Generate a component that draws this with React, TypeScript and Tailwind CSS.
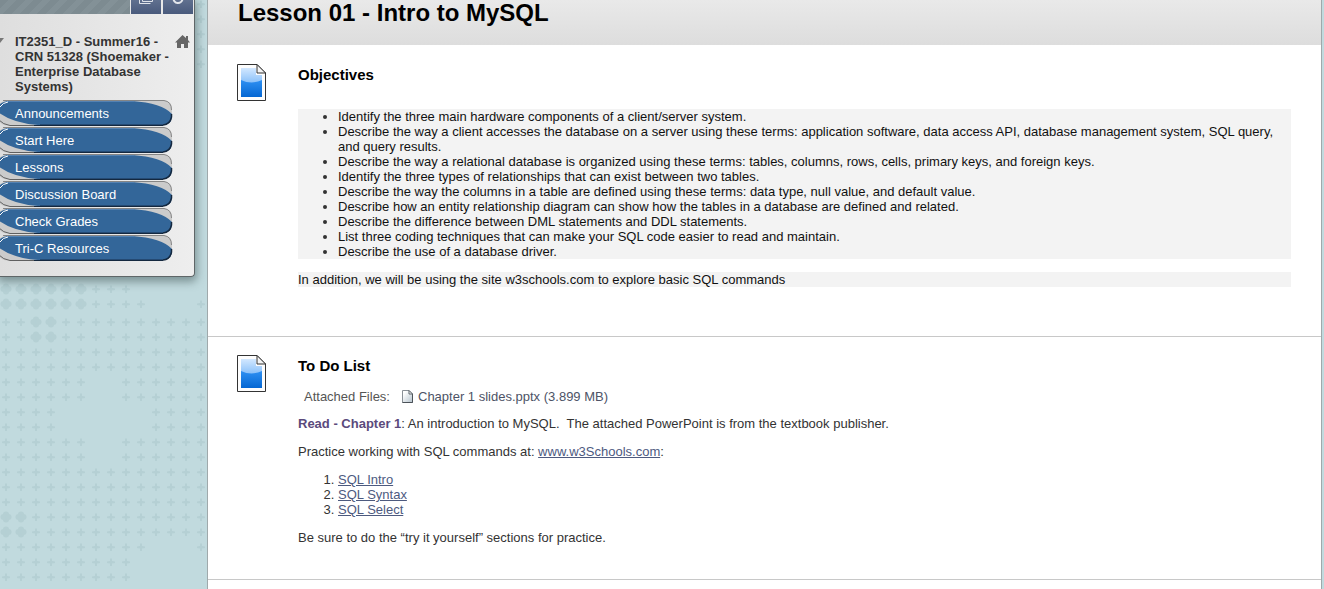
import React from 'react';

const menuItems = ['Announcements', 'Start Here', 'Lessons', 'Discussion Board', 'Check Grades', 'Tri-C Resources'];

const objectives = [
  'Identify the three main hardware components of a client/server system.',
  'Describe the way a client accesses the database on a server using these terms: application software, data access API, database management system, SQL query, and query results.',
  'Describe the way a relational database is organized using these terms: tables, columns, rows, cells, primary keys, and foreign keys.',
  'Identify the three types of relationships that can exist between two tables.',
  'Describe the way the columns in a table are defined using these terms: data type, null value, and default value.',
  'Describe how an entity relationship diagram can show how the tables in a database are defined and related.',
  'Describe the difference between DML statements and DDL statements.',
  'List three coding techniques that can make your SQL code easier to read and maintain.',
  'Describe the use of a database driver.',
];

// One string per row of the backdrop: "o" is a clover, "+" a small cross.
const patternRows: [number, string][] = [
  [4, '             +'],
  [19, '             +'],
  [34, '             +'],
  [49, '             +'],
  [64, '             +'],
  [289, 'oooooo+++'],
  [304, 'oooooo++++   +'],
  [322, '++oo++++++++++'],
  [337, '++oo++++++++++'],
  [352, '++++++++++++++'],
  [367, '++++++++++++++'],
  [382, '++++++  ++++++'],
  [397, '++++++  ++++++'],
  [412, '++++      ++++'],
  [427, '++++      ++++'],
  [442, '++++++  ++++++'],
  [457, '++++++  ++++++'],
  [472, '++++++++++++++'],
  [487, '++++++++++++++'],
  [502, '++++++++++++++'],
  [517, 'oo++++++++++++'],
  [532, 'oo++++++++++++'],
  [547, '++++++++++   +'],
  [562, '+++++++++'],
  [577, '+++++++++'],
];

function Backdrop() {
  return (
    <svg className="absolute left-0 top-0" width="207" height="589" aria-hidden="true">
      {patternRows.map(([y, row]) =>
        row.split('').map((mark, i) => {
          const x = 6 + i * 15;
          if (mark === 'o') {
            return (
              <g key={`${y}-${i}`} fill="#b5d0d4">
                <circle cx={x} cy={y - 2.5} r="3" />
                <circle cx={x} cy={y + 2.5} r="3" />
                <circle cx={x - 2.5} cy={y} r="3" />
                <circle cx={x + 2.5} cy={y} r="3" />
              </g>
            );
          }
          if (mark === '+') {
            return (
              <path
                key={`${y}-${i}`}
                fill="#b5d0d4"
                d={`M${x - 1} ${y - 3.5}h2v2.500l3 .5v1.500l-3 .5v2.500h-2v-2.500l-3-.5v-1.500l3-.5z`}
              />
            );
          }
          return null;
        }),
      )}
    </svg>
  );
}

function DocumentIcon() {
  return (
    <svg className="shrink-0" width="29" height="37" viewBox="0 0 29 37" aria-hidden="true">
      <defs>
        <linearGradient id="docTop" x1="0" y1="0" x2="0" y2="1">
          <stop offset="0" stopColor="#d3e8ff" />
          <stop offset="0.600" stopColor="#7db9f8" />
        </linearGradient>
        <linearGradient id="docLow" x1="0" y1="0" x2="0" y2="1">
          <stop offset="0" stopColor="#2f90f2" />
          <stop offset="1" stopColor="#0567d3" />
        </linearGradient>
      </defs>
      <path d="M.5.5H20L28.500 9v27.500H.5z" fill="#fdfdfd" stroke="#333" />
      <path d="M4 4h15v7h6v22H4z" fill="url(#docTop)" />
      <path d="M4 16q10.500 5 21 0v17H4z" fill="url(#docLow)" />
      <path d="M20 .5V9h8.500z" fill="#f4f4f4" stroke="#333" strokeLinejoin="round" />
    </svg>
  );
}

function FileIcon() {
  return (
    <svg className="shrink-0" width="11" height="13" viewBox="0 0 11 13" aria-hidden="true">
      <defs>
        <linearGradient id="fileFill" x1="0" y1="0" x2="1" y2="1">
          <stop offset="0.200" stopColor="#fff" />
          <stop offset="1" stopColor="#b4c2cc" />
        </linearGradient>
      </defs>
      <path d="M.5.5H7L10.500 4v8.500H.5z" fill="url(#fileFill)" stroke="#8a9096" />
      <path d="M10.500 4v8.500H.5" fill="none" stroke="#4b5258" />
      <path d="M7 .5V4h3.500z" fill="#fff" stroke="#5d646a" />
    </svg>
  );
}

function MenuButton({ label }: { label: string }) {
  return (
    <a href="#" className="relative block h-[27px] w-[173px] pl-[15px] text-[13px] leading-[28px] text-white">
      <svg className="absolute left-0 top-0" width="173" height="27" viewBox="0 0 173 27" aria-hidden="true">
        <path d="M-10 .5H164Q172 1 172 9V17Q171 25 163 25.500H6Q-1 24-4 17V9Q-2 2 6 .5z" fill="#cbcbcb" />
        <path d="M3 .5H164Q171.500 1.500 171.500 10" fill="none" stroke="#858585" />
        <path d="M-2 14V6Q2 1 10 1H132Q162 3 172 14V17Q171 25 163 25H38Q12 23-2 12z" fill="#336699" />
        <path d="M6 1.500H134" fill="none" stroke="#5482b3" />
        <path d="M0 7Q3 2.500 8 2" fill="none" stroke="#fff" />
        <path d="M171.500 14V17Q170 24.500 163 25" fill="none" stroke="#14283f" strokeWidth="1.500" />
        <path d="M163 25.500H32" fill="none" stroke="#14283f" />
        <path d="M163 24.500H40" fill="none" stroke="#254a73" />
        <path d="M-1 20Q3 24.500 10 25.500H34" fill="none" stroke="#606060" />
      </svg>
      <span className="relative">{label}</span>
    </a>
  );
}

function Sidebar() {
  return (
    <aside className="relative w-[207px] shrink-0 overflow-hidden">
      <Backdrop />
      <div className="relative w-[195px] rounded-br border-b border-r border-[#5f6668] bg-linear-to-r from-[#dedede] to-[#eeeeee] pb-[14px] shadow-[0_3px_9px_2px_rgba(60,80,80,0.5)]">
        <div className="flex h-[14px] bg-[#e8e8e8] pr-px">
          <div className="mr-px flex-1 bg-[repeating-linear-gradient(135deg,#7d8b91_0px,#7d8b91_6px,#839197_6px,#839197_12px)]" />
          <button aria-label="Open menu in a window" className="mr-[2px] flex h-[14px] w-[30px] justify-center overflow-hidden bg-linear-to-b from-[#60708f] to-[#495a7c]">
            <svg width="15" height="14" viewBox="0 0 15 14" aria-hidden="true">
              <path d="M.5 0V3.500H11.500M3.500 0V1.500H13.500V0" fill="none" stroke="#dfe3ea" />
            </svg>
          </button>
          <button aria-label="Refresh" className="flex h-[14px] w-[30px] justify-center overflow-hidden bg-linear-to-b from-[#60708f] to-[#495a7c]">
            <svg width="14" height="14" viewBox="0 0 14 14" aria-hidden="true">
              <path d="M2.500-2A4.500 4.500 0 0 0 11.500-1" fill="none" stroke="#e3e6ec" strokeWidth="2" />
            </svg>
          </button>
        </div>
        <div className="flex pt-5">
          <svg className="mt-1 shrink-0" width="15" height="8" aria-hidden="true">
            <path d="M-4 0H4L0 5z" fill="#777" />
          </svg>
          <h2 className="w-[160px] text-[13px] font-bold leading-[15px] text-[#333]">
            IT2351_D - Summer16 - CRN 51328 (Shoemaker - Enterprise Database Systems)
          </h2>
          <a href="#" aria-label="Course home">
            <svg className="mt-px" width="15" height="14" viewBox="0 0 15 14" aria-hidden="true">
              <path d="M7.500 0L11 3V1h2v4l2 2.500h-2V13H9V9H6v4H2V7.500H0z" fill="#666" />
            </svg>
          </a>
        </div>
        <nav className="pt-[6px]">
          {menuItems.map((label) => (
            <MenuButton key={label} label={label} />
          ))}
        </nav>
      </div>
    </aside>
  );
}

const linkStyle = 'text-[#4d5a7f] underline';

export default function App() {
  return (
    <div className="flex min-h-screen overflow-hidden bg-[#c1dade] font-['Liberation_Sans',Arial,sans-serif] text-[13px] leading-[15px] text-[#333]">
      <Sidebar />
      <main className="mr-[2px] min-w-0 flex-1 border-x border-[#9fa9ab] bg-white">
        <header className="h-[45px] bg-linear-to-b from-[#e9e9e9] to-[#dddddd] pl-[30px]">
          <h1 className="text-[24px] font-bold leading-[26px] text-black">Lesson 01 - Intro to MySQL</h1>
        </header>

        <article className="flex gap-8 border-b border-[#c8c8c8] pb-[49px] pl-[29px] pr-[30px] pt-[19px]">
          <DocumentIcon />
          <div className="min-w-0 flex-1">
            <h3 className="pt-[2px] text-[15px] font-bold leading-[17px] text-black">Objectives</h3>
            <ul className="mt-[26px] list-disc bg-[#f3f3f3] pl-10">
              {objectives.map((text) => (
                <li key={text}><span className="text-[#111]">{text}</span></li>
              ))}
            </ul>
            <p className="mt-[13px] bg-[#f3f3f3] text-[#111]">
              In addition, we will be using the site w3schools.com to explore basic SQL commands
            </p>
          </div>
        </article>

        <article className="flex gap-8 border-b border-[#c8c8c8] pb-[34px] pl-[29px] pr-[30px] pt-[18px]">
          <DocumentIcon />
          <div className="min-w-0 flex-1">
            <h3 className="pt-[2px] text-[15px] font-bold leading-[17px] text-black">To Do List</h3>
            <div className="mt-[15px] flex items-center pl-[6px] text-[#555]">
              <span>Attached Files:</span>
              <a href="#" className="ml-3 flex items-center gap-[5px] text-[#4d5366]">
                <FileIcon />
                <span>Chapter 1 slides.pptx (3.899 MB)</span>
              </a>
            </div>
            <p className="mt-3">
              <strong className="text-[#5b4a7c]">Read - Chapter 1</strong>: An introduction to MySQL.&nbsp; The attached PowerPoint is from the textbook publisher.
            </p>
            <p className="mt-[13px]">
              Practice working with SQL commands at: <a href="#" className={linkStyle}>www.w3Schools.com</a>:
            </p>
            <ol className="mt-[13px] list-decimal pl-10">
              <li><a href="#" className={linkStyle}>SQL Intro</a></li>
              <li><a href="#" className={linkStyle}>SQL Syntax</a></li>
              <li><a href="#" className={linkStyle}>SQL Select</a></li>
            </ol>
            <p className="mt-[13px]">Be sure to do the “try it yourself” sections for practice.</p>
          </div>
        </article>
      </main>
    </div>
  );
}
